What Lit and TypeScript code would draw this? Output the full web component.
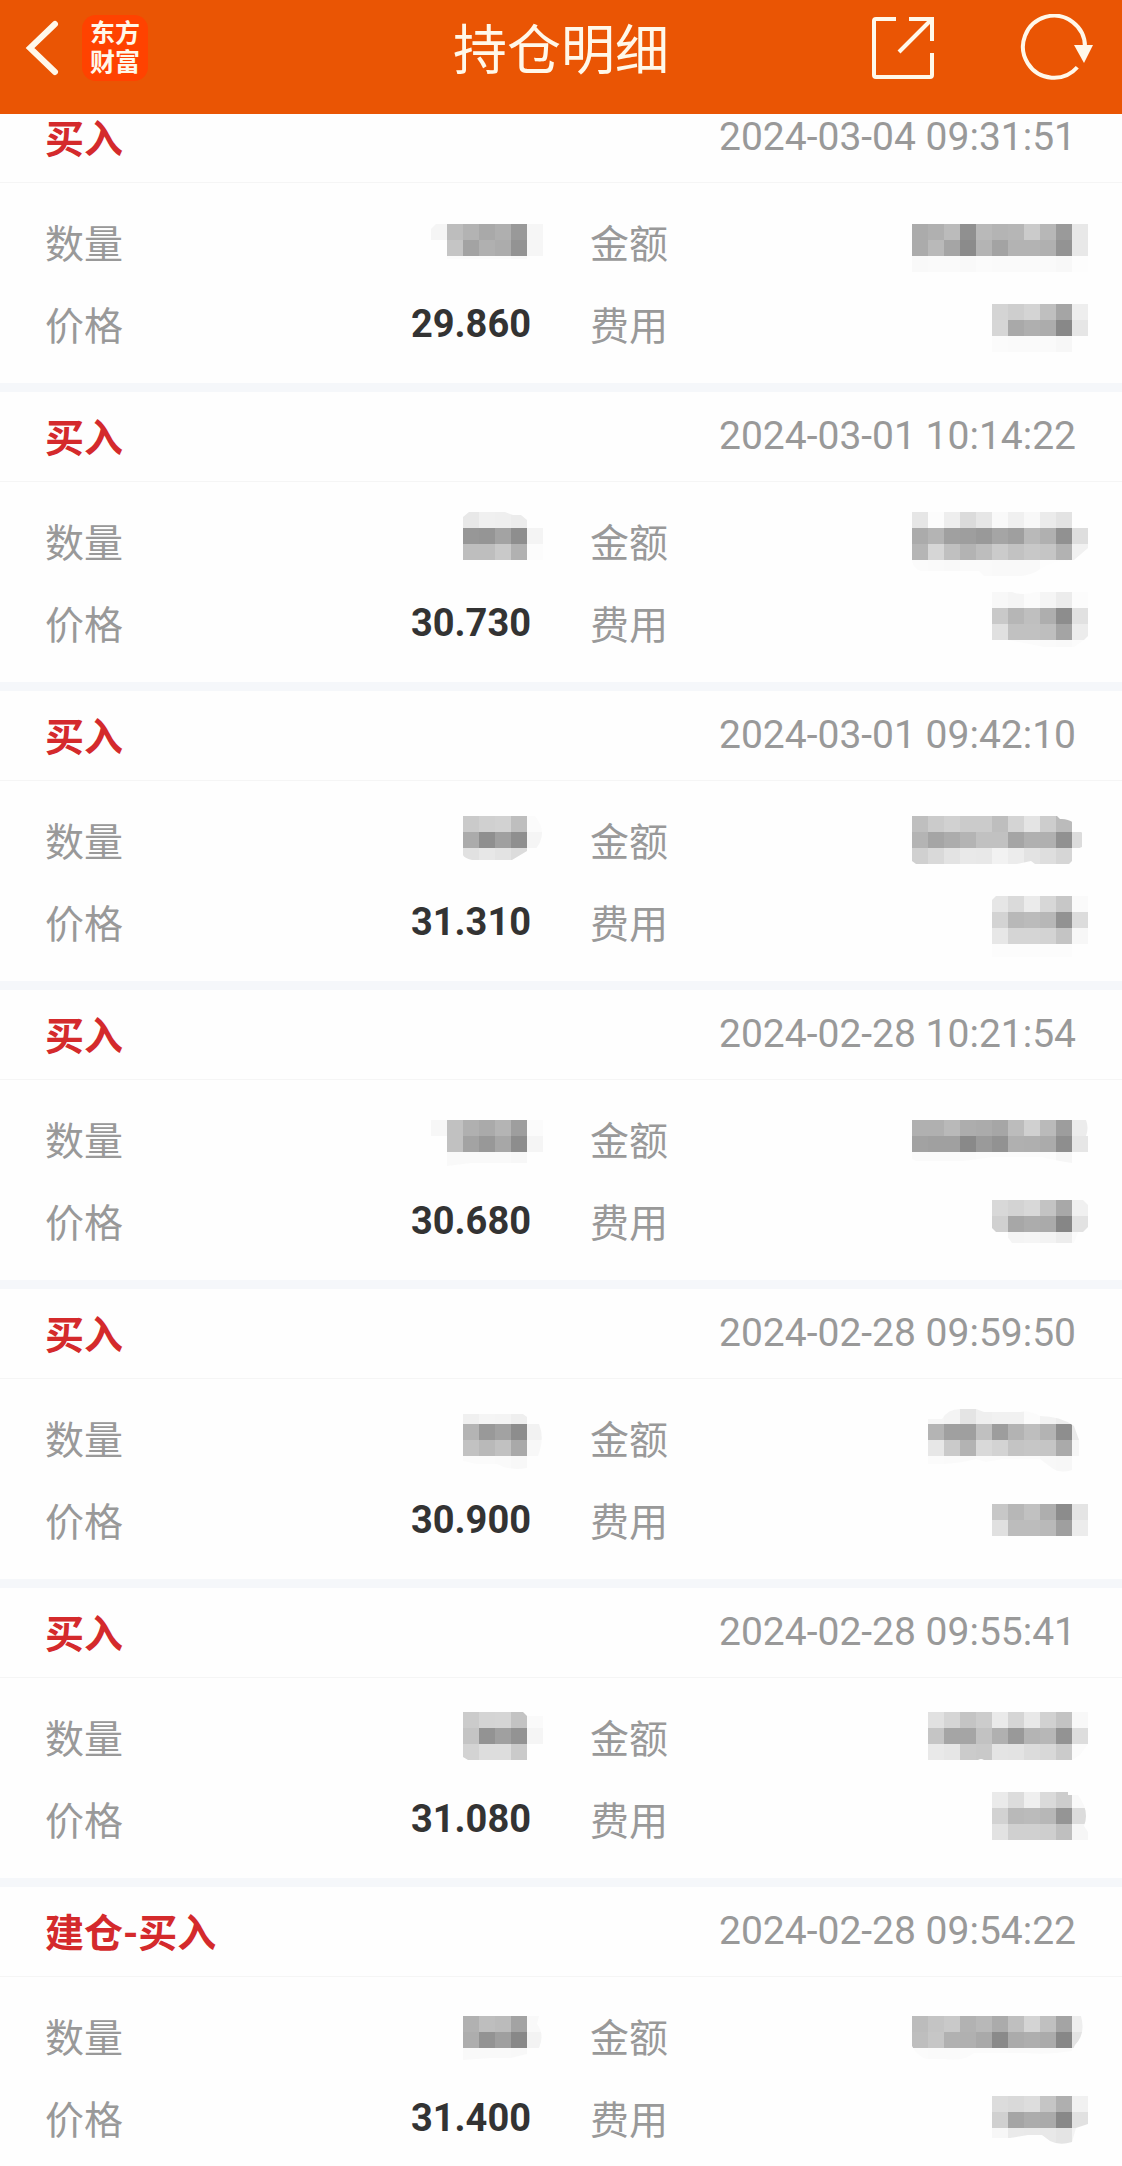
import { LitElement, html, svg, css } from "lit";
import { customElement, property } from "lit/decorators.js";

/** A hidden value: rows of grey levels (two hex digits per cell), right-aligned. */
interface Mosaic {
  top: number;
  rows: string[];
  clip?: string;
}

interface Trade {
  kind: string;
  time: string;
  price: string;
  quantity: Mosaic;
  amount: Mosaic;
  fee: Mosaic;
}

const CELL = 16;
const COLUMNS = 12;

const TRADES: Trade[] = [
  {
    kind: "买入",
    time: "2024-03-04 09:31:51",
    price: "29.860",
    quantity: { top: 21, rows: ["f5 bd b3 a9 af 99 f6", "ff c5 a3 b0 ac 93 f6", "ff fb fb fb fb f9 ff"], clip: "M80 26l5 -5h107v32h-16v3h-96z" },
    amount: {
      top: 21,
      rows: [
        "ab b0 bb 90 b9 b4 b6 cb b7 9a e8",
        "ab b9 a5 8b b4 a3 b3 b3 b0 93 e8",
        "f9 fa fa f9 fb fa fa fa fa f8 fd",
      ],
    },
    fee: { top: 19, rows: ["d4 ce d4 bf a5 ee", "d6 a9 af ac 88 e6", "fb fa fa fa f7 ff"] },
  },
  {
    kind: "买入",
    time: "2024-03-01 10:14:22",
    price: "30.730",
    quantity: {
      top: 10,
      rows: ["e8 f0 ef ec ff", "97 95 a3 8e f4", "be be c9 b1 fc"],
      clip: "M112 15l6 -5h36l8 3h8l6 5v8h16v32h-80z",
    },
    amount: {
      top: 10,
      rows: [
        "e6 fc ee db e6 f9 f0 f8 eb e3 fe",
        "ab b4 a0 9e 99 a5 9f b9 b0 91 de",
        "b5 d6 c0 b3 bd cb c2 c8 c5 b2 f1",
        "fb fa f9 fa fa f9 f9 f9 fd fd ff",
      ],
      clip: "M16 10h176v36l-14 12q-20 0 -32 8q-14 10 -30 8h-28l-5 -5h-58q-8 -2 -9 -11z",
    },
    fee: {
      top: 8,
      rows: ["f8 f5 fb f5 ec fc", "c9 b6 bf ae 8d e1", "e0 c1 c1 be a4 ec", "ff fb fb fa f9 fb"],
      clip: "M96 8h20q10 4 24 0h52v44l-4 4l-10 7h-30l-36 -7h-16z",
    },
  },
  {
    kind: "买入",
    time: "2024-03-01 09:42:10",
    price: "31.310",
    quantity: {
      top: 15,
      rows: ["ca d0 d2 be fb", "ab 8f a0 8f f5", "e1 e7 e3 dc fe"],
      clip: "M112 15h72q14 17 0 34l-8 1l-15 9h-40q-8 -2 -9 -5z",
    },
    amount: {
      top: 15,
      rows: [
        "bf cb d1 cb cb be d4 e4 cd bb ff",
        "b4 a5 ac b4 c1 c1 a5 b0 b0 91 dc",
        "d0 d9 e3 e9 e8 f2 ec e3 de d6 ff",
      ],
      clip: "M16 15h145l3 3q14 -1 22 14v14l-10 4v10l-3 3h-34l-4 -3l-14 3h-101l-4 -3z",
    },
    fee: {
      top: 13,
      rows: ["e6 da eb d7 c7 fa", "d3 b8 bb b7 92 dc", "e7 d5 d5 d3 c4 f7", "fc fc fc fc fc ff"],
      clip: "M96 17l4 -4h92v48h-16v13h-80z",
    },
  },
  {
    kind: "买入",
    time: "2024-02-28 10:21:54",
    price: "30.680",
    quantity: { top: 20, rows: ["f7 c1 b0 aa b4 9e fb", "ff c1 a3 98 a7 8d f5", "ff f9 f9 f9 f9 f7 ff"], clip: "M80 20h112v32h-16v11h-56l-24 3h-16z" },
    amount: {
      top: 20,
      rows: [
        "b0 b0 b9 ad ab a6 bc d0 ba 9d ec",
        "a2 a0 a0 89 9a 92 b0 af ab 8e e6",
        "fa fa fa fa fb fb fb fb fb f6 ff",
      ],
      clip: "M16 20h174q3 8 0 16h2v16h-16v11q-20 -3 -30 -6h-50q-20 3 -30 4h-46l-4 -2z",
    },
    fee: {
      top: 18,
      rows: ["d8 d3 d8 c3 a8 f0", "d0 a7 ac aa 86 e2", "ff f4 f5 f3 ed fb"],
      clip: "M96 18h91l5 5v22l-5 5h-5l-4 11h-62l-8 -11h-8l-4 -4z",
    },
  },
  {
    kind: "买入",
    time: "2024-02-28 09:59:50",
    price: "30.900",
    quantity: {
      top: 9,
      rows: ["f0 f5 f4 ef ff", "b4 99 a2 8d f2", "c2 b9 c1 a9 f8", "fb fb fa f8 ff"],
      clip: "M112 15h60l4 3v7h12q6 14 -1 32h-11v12q-18 3 -30 -4h-20l-14 -3z",
    },
    amount: {
      top: 9,
      rows: [
        "f6 f4 e4 ef f1 f1 fb f3 ee ff",
        "b4 a0 9f c0 9d b3 be b3 8e ea",
        "e7 ca b3 d9 d3 c4 c6 c5 aa f6",
        "fb fa fa fb fb fb fb f8 f7 ff",
      ],
      clip: "M32 20h14q6 -10 18 -10h16l8 3h36q10 -2 20 4q20 0 34 10l5 14v16h-7v14q-12 4 -20 -2l-12 -9h-38l-16 3l-10 -3q-14 4 -32 5h-16z",
    },
    fee: { top: 23, rows: ["c7 b7 c1 ae 8c e4", "e0 bc bc b9 9f ec"] },
  },
  {
    kind: "买入",
    time: "2024-02-28 09:55:41",
    price: "31.080",
    quantity: {
      top: 14,
      rows: ["cb d4 d5 c3 fa", "c4 93 a0 93 f5", "d3 dd dd ca fe"],
      clip: "M112 14h60l4 4h16v44h-16l-3 0h-56l-5 -3z",
    },
    amount: {
      top: 14,
      rows: [
        "e1 d5 c4 cc ea d5 e8 d1 c3 f8",
        "c5 a5 a5 c2 b0 99 b4 b7 93 dd",
        "e9 e6 cb c9 e4 e3 dc d8 cb fb",
      ],
      clip: "M32 14h160v32l-8 11l-8 5h-88q-3 -2 -6 0h-50z",
    },
    fee: {
      top: 12,
      rows: ["ea dc ef da cd f9", "d2 b9 bb b7 95 dc", "e2 d0 d0 ce bf f6"],
      clip: "M96 12h76v3h10q12 16 6 31l4 6v8h-96z",
    },
  },
  {
    kind: "建仓-买入",
    time: "2024-02-28 09:54:22",
    price: "31.400",
    quantity: { top: 19, rows: ["b1 be bb a3 f9", "ad 93 9f 88 f3", "f9 f9 f9 f8 ff"], clip: "M112 19h76l-2 8q8 10 2 24h-12v6l-16 4h-20l-28 2z" },
    amount: {
      top: 19,
      rows: [
        "bc c4 c9 b2 b8 ab bf d4 c0 a4 ee",
        "be c6 b1 b0 a9 8a ab ae ab 87 e3",
        "fb fa fa fb fb fb fa fa fa fa ff",
      ],
      clip: "M16 19h169q5 18 -6 29l-3 6q-24 4 -46 2h-52q-10 9 -30 6h-18q-10 -4 -14 -13z",
    },
    fee: {
      top: 17,
      rows: ["dc d9 dd c5 af f1", "d0 a5 ac aa 88 e1", "f7 ea e9 e8 e4 f4"],
      clip: "M96 17h96v28l-12 4l-4 14q-12 4 -22 -1l-8 -6h-14l-18 3h-18z",
    },
  },
];

@customElement("hidden-value")
class HiddenValue extends LitElement {
  @property({ attribute: false }) mosaic!: Mosaic;

  static styles = css`
    :host {
      display: block;
      flex: none;
    }
    .cells {
      display: block;
      shape-rendering: crispEdges;
    }
  `;

  render() {
    const { top, rows, clip } = this.mosaic;
    return html`<svg class="cells" width="192" height="82" viewBox="0 0 192 82" role="img" aria-label="已隐藏">
      ${clip ? svg`<clipPath id="edge"><path d=${clip}></path></clipPath>` : null}
      <g clip-path=${clip ? "url(#edge)" : "none"}>
        ${rows.map((row, r) => {
          const levels = row.split(" ");
          const first = COLUMNS - levels.length;
          return levels.map(
            (level, c) =>
              svg`<rect x=${(first + c) * CELL} y=${top + r * CELL} width=${CELL} height=${CELL} fill=${level === "ff" ? "none" : "#" + level.repeat(3)}></rect>`,
          );
        })}
      </g>
    </svg>`;
  }
}

@customElement("trade-card")
class TradeCard extends LitElement {
  @property({ attribute: false }) trade!: Trade;

  static styles = css`
    :host {
      display: block;
    }
    .head {
      display: flex;
      align-items: center;
      justify-content: space-between;
      height: 89px;
      padding: 0 46px 0 45px;
      border-bottom: 1px solid #f5f5f5;
    }
    .kind {
      margin: 0;
      padding-top: 4px;
      font-size: 39px;
      line-height: 56px;
      font-weight: 700;
      color: #d42a2c;
    }
    .time {
      padding-bottom: 2px;
      font-size: 39px;
      line-height: 56px;
      color: #999;
    }
    .fields {
      display: grid;
      grid-template-columns: 1fr 1fr;
      column-gap: 59px;
      margin: 0;
      padding: 20px 46px 16px 45px;
    }
    .field {
      display: flex;
      align-items: center;
      justify-content: space-between;
      height: 82px;
      min-width: 0;
    }
    .name {
      padding-top: 2px;
      font-size: 39px;
      line-height: 56px;
      color: #999;
    }
    .value {
      margin: 0;
      padding-bottom: 4px;
      font-size: 38px;
      line-height: 56px;
      font-weight: 700;
      color: #333;
    }
    .covered {
      margin: 0 -12px 0 0;
    }
  `;

  render() {
    const t = this.trade;
    return html`
      <article>
        <header class="head">
          <h2 class="kind">${t.kind}</h2>
          <time class="time">${t.time}</time>
        </header>
        <dl class="fields">
          <div class="field">
            <dt class="name">数量</dt>
            <dd class="covered"><hidden-value .mosaic=${t.quantity}></hidden-value></dd>
          </div>
          <div class="field">
            <dt class="name">金额</dt>
            <dd class="covered"><hidden-value .mosaic=${t.amount}></hidden-value></dd>
          </div>
          <div class="field">
            <dt class="name">价格</dt>
            <dd class="value">${t.price}</dd>
          </div>
          <div class="field">
            <dt class="name">费用</dt>
            <dd class="covered"><hidden-value .mosaic=${t.fee}></hidden-value></dd>
          </div>
        </dl>
      </article>
    `;
  }
}

@customElement("app-root")
class AppRoot extends LitElement {
  static styles = css`
    :host {
      display: flex;
      flex-direction: column;
      height: 100vh;
      overflow: hidden;
      background: #fefefe;
      font-family: Roboto, "Noto Sans CJK SC", sans-serif;
    }
    .bar {
      display: grid;
      grid-template-columns: 1fr auto 1fr;
      align-items: center;
      flex: none;
      box-sizing: border-box;
      height: 114px;
      padding: 0 24px 18px;
      background: #ea5504;
      color: #fff8ea;
      z-index: 1;
    }
    .left,
    .right {
      display: flex;
      align-items: center;
    }
    .left {
      gap: 20px;
    }
    .right {
      justify-content: flex-end;
      gap: 84px;
      padding-right: 4px;
    }
    .button {
      display: block;
      padding: 0;
      border: 0;
      background: none;
      color: inherit;
    }
    .icon {
      display: block;
    }
    .logo {
      display: flex;
      flex-direction: column;
      align-items: center;
      justify-content: center;
      width: 66px;
      height: 66px;
      border-radius: 14px;
      background: #ff4200;
      color: #fff8ea;
      font-size: 25px;
      line-height: 29px;
      font-weight: 700;
      text-decoration: none;
    }
    .title {
      margin: 0;
      padding-top: 8px;
      font-size: 54px;
      line-height: 80px;
      font-weight: 400;
    }
    .list {
      flex: 1;
      min-height: 0;
      margin-top: -21px;
      overflow: auto;
      scrollbar-width: none;
      display: flex;
      flex-direction: column;
      gap: 9px;
      background: #f5f7fa;
    }
    .card {
      flex: none;
      background: #fefefe;
    }
  `;

  render() {
    return html`
      <header class="bar">
        <div class="left">
          <button class="button" aria-label="返回">
            <svg class="icon" width="38" height="60" viewBox="0 0 38 60" fill="none" stroke="currentColor" stroke-width="6" stroke-linecap="round" stroke-linejoin="miter">
              <path d="M31 6L6 30L31 54"></path>
            </svg>
          </button>
          <a class="logo" href="#"><span>东方</span><span>财富</span></a>
        </div>
        <h1 class="title">持仓明细</h1>
        <div class="right">
          <button class="button" aria-label="分享">
            <svg class="icon" width="66" height="66" viewBox="0 0 66 66" fill="none" stroke="currentColor" stroke-width="4" stroke-linejoin="round">
              <path d="M26 4H6Q4 4 4 6V60Q4 62 6 62H60Q62 62 62 60V38"></path>
              <path d="M39 4H62V26" stroke-linejoin="miter"></path>
              <path d="M61 5L29 37"></path>
            </svg>
          </button>
          <button class="button" aria-label="刷新">
            <svg class="icon" width="74" height="68" viewBox="0 0 74 68">
              <path d="M57.300 53.200A31 31 0 1 1 65 33" fill="none" stroke="currentColor" stroke-width="4"></path>
              <path d="M54 31H73L64 49Z" fill="currentColor"></path>
            </svg>
          </button>
        </div>
      </header>
      <main class="list">
        ${TRADES.map((trade) => html`<trade-card class="card" .trade=${trade}></trade-card>`)}
      </main>
    `;
  }
}
